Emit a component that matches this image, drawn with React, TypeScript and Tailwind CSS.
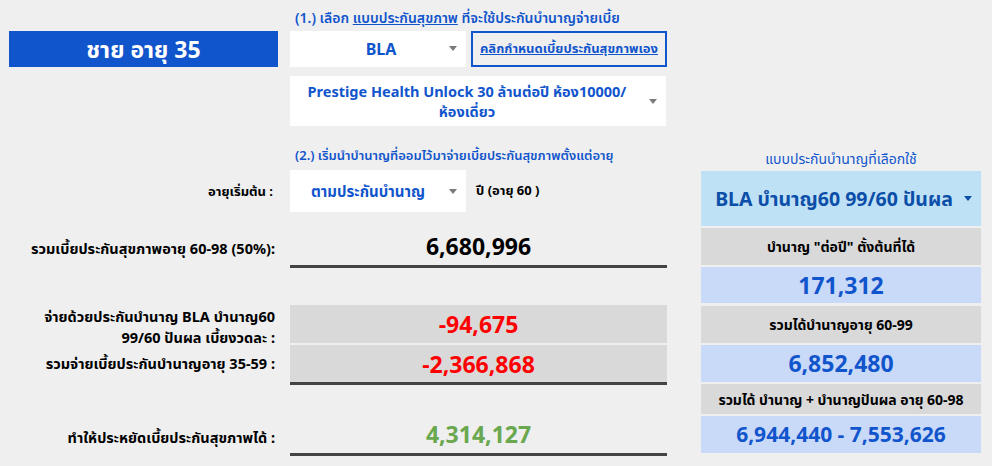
import React from "react";

const THAI = { fontFamily: '"Noto Sans", "Noto Sans Thai", "Open Sans", sans-serif' };
const NUM = { fontFamily: '"Open Sans", "Noto Sans", "Noto Sans Thai", sans-serif' };

/* ---------- DROPDOWN ARROW ---------- */

function Arrow({ color = "border-t-[#7a7a7a]" }: { color?: string }) {
  return (
    <span
      className={`h-0 w-0 border-l-[4px] border-r-[4px] border-t-[5px] border-l-transparent border-r-transparent ${color}`}
    />
  );
}

/* ---------- LEFT SIDE ROW ---------- */

function Row({
  label,
  h,
  children
}: {
  label?: React.ReactNode;
  h: string;
  children?: React.ReactNode;
}) {
  return (
    <div className={`flex ${h}`}>
      <div className="flex w-[290px] shrink-0 items-center justify-end pr-[15px] text-right text-[14.5px] font-bold leading-[21px] text-black">
        {label}
      </div>
      <div className="flex w-[377px] shrink-0">{children}</div>
    </div>
  );
}

/* ---------- RIGHT SIDE CELLS ---------- */

function GrayCell({ h, children }: { h: string; children: React.ReactNode }) {
  return (
    <div className={`flex ${h} items-center justify-center bg-[#d9d9d9] text-[14px] font-bold text-black`}>
      {children}
    </div>
  );
}

function BlueCell({
  h,
  size = "text-[23px]",
  children
}: {
  h: string;
  size?: string;
  children: React.ReactNode;
}) {
  return (
    <div
      style={NUM}
      className={`flex ${h} items-center justify-center bg-[#c9daf8] ${size} font-bold text-[#1155cc]`}
    >
      {children}
    </div>
  );
}

export default function App() {
  return (
    <div style={THAI} className="flex h-[466px] w-[992px] overflow-hidden bg-[#efefef]">
      {/* LEFT + MIDDLE */}
      <div className="flex w-[667px] flex-col">
        <Row h="h-[31px]">
          <div className="flex items-end pb-[3px] pl-[5px] text-[14px] font-semibold text-[#1155cc]">
            <span>
              (1.) เลือก <span className="underline">แบบประกันสุขภาพ</span> ที่จะใช้ประกันบำนาญจ่ายเบี้ย
            </span>
          </div>
        </Row>

        <div className="flex h-[36px]">
          <div className="w-[290px] shrink-0 pl-[9px] pr-[12px]">
            <div className="flex h-full items-center justify-center bg-[#1155cc] text-[23px] font-bold text-white">
              ชาย อายุ 35
            </div>
          </div>
          <div className="flex w-[377px] gap-[5px]">
            <div className="relative flex w-[176px] items-center justify-center pl-[6px] bg-white text-[16px] font-bold text-[#1155cc]">
              BLA
              <span className="absolute right-[9px] top-[15px] flex">
                <Arrow />
              </span>
            </div>
            <div className="flex w-[196px] items-center justify-center border-2 border-[#1155cc] text-[13px] font-bold text-[#1155cc] underline">
              คลิกกำหนดเบี้ยประกันสุขภาพเอง
            </div>
          </div>
        </div>

        <div className="h-[9px]" />

        <Row h="h-[50px]">
          <div className="relative flex w-[376px] items-center justify-center bg-white pl-[10px] pr-[32px] text-center text-[14.5px] font-bold leading-[20px] text-[#1155cc]">
            Prestige Health Unlock 30 ล้านต่อปี ห้อง10000/ ห้องเดี่ยว
            <span className="absolute right-[9px] top-[23px] flex">
              <Arrow />
            </span>
          </div>
        </Row>

        <Row h="h-[44px]">
          <div className="flex items-end pb-[5px] pl-[5px] text-[13px] font-semibold text-[#1155cc]">
            (2.) เริ่มนำบำนาญที่ออมไว้มาจ่ายเบี้ยประกันสุขภาพตั้งแต่อายุ
          </div>
        </Row>

        <Row h="h-[42px]" label={<span className="pr-[2px] text-[13px]">อายุเริ่มต้น :</span>}>
          <div className="relative flex w-[176px] items-center justify-center pr-[20px] bg-white text-[15px] font-bold text-[#1155cc]">
            ตามประกันบำนาญ
            <span className="absolute right-[9px] top-[19px] flex">
              <Arrow />
            </span>
          </div>
          <div className="flex items-center pl-[10px] text-[13px] font-bold text-black">
            ปี (อายุ 60 )
          </div>
        </Row>

        <div className="h-[16px]" />

        <Row h="h-[40px]" label={<span className="pt-[1px]">รวมเบี้ยประกันสุขภาพอายุ 60-98 (50%):</span>}>
          <div
            style={NUM}
            className="flex w-[377px] items-center justify-center border-b-[3px] border-[#434343] text-[23px] font-bold text-black"
          >
            6,680,996
          </div>
        </Row>

        <div className="h-[37px]" />

        <Row
          h="h-[38px]"
          label={
            <span className="block pt-[5px]">
              จ่ายด้วยประกันบำนาญ BLA บำนาญ60
              <br />
              99/60 ปันผล เบี้ยงวดละ :
            </span>
          }
        >
          <div
            style={NUM}
            className="flex w-[377px] items-center justify-center bg-[#d9d9d9] text-[23px] font-bold text-[#ff0000]"
          >
            -94,675
          </div>
        </Row>

        <div className="h-[2px]" />

        <Row h="h-[40px]" label={<span className="-mt-[3px]">รวมจ่ายเบี้ยประกันบำนาญอายุ 35-59 :</span>}>
          <div
            style={NUM}
            className="flex w-[377px] items-center justify-center border-b-[3px] border-[#434343] bg-[#d9d9d9] pt-[1px] text-[23px] font-bold text-[#ff0000]"
          >
            -2,366,868
          </div>
        </Row>

        <div className="h-[30px]" />

        <Row h="h-[41px]" label={<span className="pt-[3px]">ทำให้ประหยัดเบี้ยประกันสุขภาพได้ :</span>}>
          <div
            style={NUM}
            className="flex w-[377px] items-center justify-center border-b-[3px] border-[#434343] text-[23px] font-bold text-[#6aa84f]"
          >
            4,314,127
          </div>
        </Row>
      </div>

      {/* RIGHT COLUMN */}
      <div className="ml-[34px] flex w-[280px] flex-col">
        <div className="h-[145px]" />
        <div className="flex h-[26px] items-center justify-center text-[14px] text-[#1155cc]">
          แบบประกันบำนาญที่เลือกใช้
        </div>
        <div className="relative flex h-[55px] items-center justify-center bg-[#bfe1f6] pr-[14px] text-[19.5px] font-bold text-[#0b4fa8]">
          BLA บำนาญ60 99/60 ปันผล
          <span className="absolute right-[9px] top-[25px] flex">
            <Arrow color="border-t-[#0b4fa8]" />
          </span>
        </div>
        <div className="h-[2px]" />
        <GrayCell h="h-[37px]">บำนาญ "ต่อปี" ตั้งต้นที่ได้</GrayCell>
        <div className="h-[2px]" />
        <BlueCell h="h-[36px]">171,312</BlueCell>
        <div className="h-[3px]" />
        <GrayCell h="h-[37px]">รวมได้บำนาญอายุ 60-99</GrayCell>
        <div className="h-[2px]" />
        <BlueCell h="h-[37px]">6,852,480</BlueCell>
        <div className="h-[2px]" />
        <GrayCell h="h-[30px]">รวมได้ บำนาญ + บำนาญปันผล อายุ 60-98</GrayCell>
        <div className="h-[2px]" />
        <BlueCell h="h-[37px]" size="text-[21px]">
          6,944,440 - 7,553,626
        </BlueCell>
      </div>
    </div>
  );
}
